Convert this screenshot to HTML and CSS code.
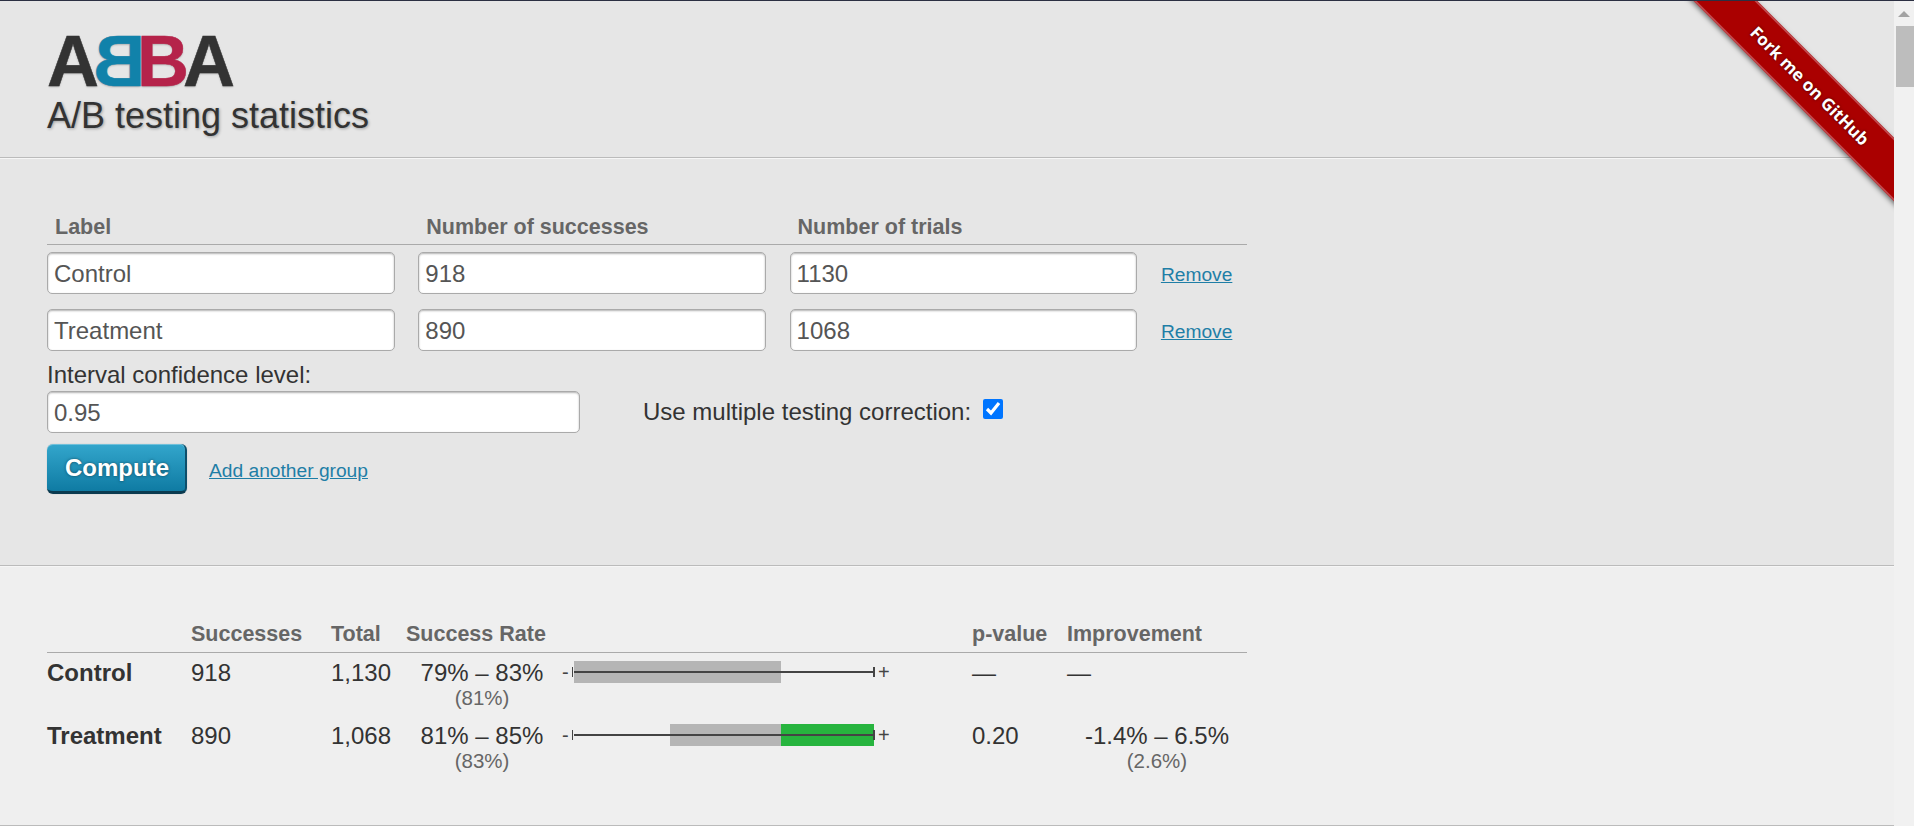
FILE: index.html
```html
<!DOCTYPE html>
<html lang="en">
<head>
<meta charset="utf-8">
<title>ABBA - A/B testing statistics</title>
<link rel="stylesheet" href="styles.css">
</head>
<body>
<div class="page">
  <main class="main">
    <header class="site-header">
      <h1 class="logo"><span class="l-a">A</span><span class="l-b1">B</span><span class="l-b2">B</span><span class="l-a2">A</span></h1>
      <div class="tagline">A/B testing statistics</div>
    </header>
    <a class="ribbon-wrap" href="#"><span class="ribbon">Fork me on GitHub</span></a>
    <section class="form-section">
      <div class="input-grid head-row">
        <div class="col-head">Label</div>
        <div class="col-head">Number of successes</div>
        <div class="col-head">Number of trials</div>
        <div class="col-head"></div>
      </div>
      <div class="input-grid group-row">
        <input class="field" type="text" value="Control">
        <input class="field" type="text" value="918">
        <input class="field" type="text" value="1130">
        <a class="link remove" href="#">Remove</a>
      </div>
      <div class="input-grid group-row">
        <input class="field" type="text" value="Treatment">
        <input class="field" type="text" value="890">
        <input class="field" type="text" value="1068">
        <a class="link remove" href="#">Remove</a>
      </div>
      <div class="options">
        <label class="conf">
          <span class="conf-label">Interval confidence level:</span>
          <input class="field conf-field" type="text" value="0.95">
        </label>
        <label class="correction">
          <span>Use multiple testing correction:</span>
          <input class="check" type="checkbox" checked>
        </label>
      </div>
      <div class="actions">
        <button class="compute" type="button">Compute</button>
        <a class="link add" href="#">Add another group</a>
      </div>
    </section>
    <section class="results">
      <table class="res-table">
        <colgroup>
          <col class="c-name"><col class="c-succ"><col class="c-total"><col class="c-rate"><col class="c-chart"><col class="c-p"><col class="c-imp">
        </colgroup>
        <thead>
          <tr><th></th><th>Successes</th><th>Total</th><th>Success Rate</th><th></th><th>p-value</th><th>Improvement</th></tr>
        </thead>
        <tbody>
          <tr>
            <th class="row-name">Control</th>
            <td>918</td>
            <td>1,130</td>
            <td class="center rate">79% – 83%<div class="sub">(81%)</div></td>
            <td class="chart-cell">
              <svg class="chart" width="335" height="52" viewBox="0 0 335 52">
                <rect class="bar-grey" x="14" y="8" width="207" height="22"/>
                <rect class="whisker" x="14" y="18" width="300" height="2"/>
                <rect class="tick" x="12" y="14" width="1" height="10"/>
                <rect class="tick" x="313" y="14" width="2" height="10"/>
                <text class="sign" x="2" y="26">-</text>
                <text class="sign" x="318" y="26">+</text>
              </svg>
            </td>
            <td>—</td>
            <td>—</td>
          </tr>
          <tr>
            <th class="row-name">Treatment</th>
            <td>890</td>
            <td>1,068</td>
            <td class="center rate">81% – 85%<div class="sub">(83%)</div></td>
            <td class="chart-cell">
              <svg class="chart" width="335" height="52" viewBox="0 0 335 52">
                <rect class="bar-grey" x="110" y="8" width="111" height="22"/>
                <rect class="bar-green" x="221" y="8" width="93" height="22"/>
                <rect class="whisker" x="14" y="18" width="300" height="2"/>
                <rect class="tick" x="12" y="14" width="1" height="10"/>
                <rect class="tick" x="313" y="14" width="2" height="10"/>
                <text class="sign" x="2" y="26">-</text>
                <text class="sign" x="318" y="26">+</text>
              </svg>
            </td>
            <td>0.20</td>
            <td class="center">-1.4% – 6.5%<div class="sub">(2.6%)</div></td>
          </tr>
        </tbody>
      </table>
    </section>
  </main>
  <aside class="scrollbar" aria-hidden="true">
    <div class="sb-arrow"></div>
    <div class="sb-thumb"></div>
  </aside>
</div>
</body>
</html>
```
FILE: styles.css
```css
* { box-sizing: border-box; }
html, body { margin: 0; padding: 0; height: 100%; overflow: hidden; }
body {
  font-family: "Liberation Sans", Arial, sans-serif;
  color: #333;
  background: #e6e6e6;
}
.page { display: flex; height: 826px; border-top: 1px solid #2b2f42; }
.main { flex: 1; min-width: 0; position: relative; display: flex; flex-direction: column; overflow: hidden; }
.scrollbar { width: 20px; background: #f1f1f1; display: flex; flex-direction: column; align-items: flex-end; }
.sb-arrow {
  width: 0; height: 0; margin: 10px 4px 0 0;
  border-left: 6px solid transparent; border-right: 6px solid transparent;
  border-bottom: 6px solid #a3a3a3;
}
.sb-thumb { width: 18px; height: 61px; margin-top: 9px; background: #bdbdbd; }

/* header */
.site-header {
  height: 157px; padding: 24px 0 0 47px;
  border-bottom: 1px solid #bbb;
  box-shadow: 0 1px 0 #f6f6f6;
  flex: none;
}
.logo {
  display: flex; margin: 0; height: 72px;
  font-size: 72px; line-height: 72px; font-weight: bold; color: #333;
  -webkit-text-stroke: .5px currentColor;
  text-shadow: 0 1px 2px rgba(0,0,0,.25);
}
.l-b1 { display: block; color: #1182aa; transform: scaleX(-1); margin-left: -6px; }
.l-b2 { color: #b5234a; margin-left: -8px; }
.l-a2 { margin-left: -6px; }
.tagline { font-size: 36px; line-height: 40px; margin-top: -1px; color: #333; text-shadow: 1px 1px 3px rgba(0,0,0,.3); }

/* ribbon */
.ribbon-wrap { position: absolute; top: 0; right: 0; width: 210px; height: 215px; overflow: hidden; text-decoration: none; z-index: 2; }
.ribbon {
  position: absolute; left: -24.5px; top: 62px; width: 300px; height: 45px;
  transform: rotate(45deg);
  display: flex; align-items: center; justify-content: center;
  background: #a00; color: #fff;
  font-family: "Open Sans", sans-serif; font-size: 17px; font-weight: 700;
  text-shadow: 0 0 3px rgba(0,0,0,.6);
  box-shadow: 0 2px 5px rgba(0,0,0,.5);
  border-top: 2px solid #c14a4e; border-bottom: 2px solid #c14a4e;
}

/* form */
.form-section { height: 408px; padding: 57px 0 0 47px; flex: none; border-bottom: 1px solid #bbb; }
.input-grid { display: grid; grid-template-columns: 347.5px 347.5px 347.5px 1fr; column-gap: 23.8px; width: 1200px; }
.head-row { border-bottom: 1px solid #aaa; height: 30px; }
.col-head { font-size: 21.5px; font-weight: bold; color: #666; padding-left: 8px; line-height: 24px; }
.group-row { margin: 7px 0 15px; height: 42px; align-items: center; }
.field {
  height: 42px; width: 100%; padding: 2px 6px 0;
  font-family: inherit; font-size: 24px; color: #555; background: #fff;
  border: 1px solid #aaa; border-radius: 5px;
  box-shadow: inset 0 1px 2px rgba(0,0,0,.3);
}
.link { color: #1f7ea6; font-size: 19.2px; text-decoration: underline; }
.remove { margin-top: 4px; }
.options { display: flex; margin-top: -5px; align-items: flex-end; }
.conf { display: flex; flex-direction: column; width: 533px; }
.conf-label { font-size: 24px; line-height: 28px; margin-bottom: 2px; }
.correction { margin-left: 63px; display: flex; align-items: center; gap: 12px; font-size: 24px; height: 42px; }
.check { width: 20px; height: 20px; margin: -6px 0 0; accent-color: #0075ff; }
.actions { display: flex; align-items: center; margin-top: 11px; gap: 22px; }
.compute {
  width: 140px; height: 50px; padding: 1px 0 0 2px;
  font-family: inherit; font-size: 24px; font-weight: bold; color: #fff;
  background: linear-gradient(#33a6cc, #0f7ba3);
  border: 0; border-bottom: 3px solid #0a3a4f; border-right: 2px solid #0d4f6b; border-radius: 6px;
  box-shadow: inset 0 1px 0 rgba(255,255,255,.3), 0 0 1px rgba(0,0,0,.3);
  text-shadow: 0 0 3px rgba(0,0,0,.5);
}
.add { margin-top: 4px; }

/* results */
.results {
  flex: 1; background: #efefef; padding: 52px 0 0 47px;
  border-top: 1px solid #f6f6f6; border-bottom: 1px solid #bbb;
}
.res-table { table-layout: fixed; width: 1200px; border-collapse: collapse; font-size: 24px; }
.c-name { width: 144px; } .c-succ { width: 140px; } .c-total { width: 75px; }
.c-rate { width: 154px; } .c-chart { width: 412px; } .c-p { width: 95px; } .c-imp { width: 180px; }
.res-table thead th {
  height: 33px; padding: 0 0 6px; text-align: left; vertical-align: bottom;
  font-size: 21.5px; line-height: 24px; color: #666; border-bottom: 1px solid #aaa; white-space: nowrap;
}
.res-table tbody td, .res-table tbody th { padding: 8px 0 6px; line-height: 24px; vertical-align: top; text-align: left; }
.res-table td.center { text-align: center; }
.res-table td.rate { padding-right: 2px; }
.row-name { font-weight: bold; }
.sub { font-size: 20.5px; color: #666; line-height: 24px; padding-top: 1px; }
.res-table td.chart-cell { padding: 0; }
.chart { display: block; }
.bar-grey { fill: #b5b5b5; }
.bar-green { fill: #27b43e; }
.whisker, .tick { fill: #444; }
.sign { font-size: 20px; fill: #444; }
```
